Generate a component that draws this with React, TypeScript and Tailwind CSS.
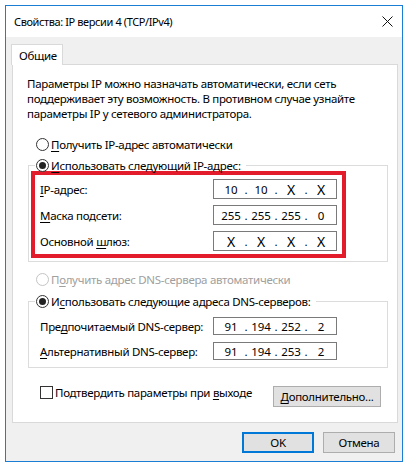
import React from 'react';

const font = { fontFamily: '"Noto Sans", "Liberation Sans", sans-serif' };

// access key: first part, underlined letter, rest
const Key = ({ pre = '', u, post }: { pre?: string; u: string; post: string }) => (
  <span className="whitespace-nowrap">
    {pre}
    <span className="underline underline-offset-2">{u}</span>
    {post}
  </span>
);

const Radio = ({ checked = false, disabled = false, children }: { checked?: boolean; disabled?: boolean; children: React.ReactNode }) => (
  <div className={`flex items-center h-[15px] ${disabled ? 'text-[#a0a0a0]' : 'text-black'}`}>
    <div
      className={`w-[13px] h-[13px] rounded-full border bg-white flex items-center justify-center shrink-0 ${
        disabled ? 'border-[#c4c4c4]' : 'border-[#333333]'
      }`}
    >
      {checked && <div className="w-[7px] h-[7px] rounded-full bg-[#222222]" />}
    </div>
    <span className="ml-[2px]">{children}</span>
  </div>
);

const IpField = ({ parts, h }: { parts: string[]; h: string }) => (
  <div className={`w-[124px] ${h} border border-[#7a7a7a] bg-white flex items-center pl-[6px] tracking-normal shrink-0`}>
    {parts.map((p, i) => (
      <React.Fragment key={i}>
        {i > 0 && <span className="w-[8px] text-center">.</span>}
        <span className={`w-[22px] text-center ${p === 'X' ? 'text-[14px]' : ''}`}>{p}</span>
      </React.Fragment>
    ))}
  </div>
);

export default function App() {
  return (
    <div
      className="w-[410px] h-[467px] bg-white pt-[5px] pl-[5px] text-[11.5px] leading-[15px] tracking-[-0.3px] text-black"
      style={font}
    >
      <div className="w-[398px] h-[457px] border border-[#1a7fd4] flex flex-col">
        {/* title bar */}
        <div className="h-[31px] bg-white flex items-center justify-between pl-[8px] pr-[9px]">
          <span className="text-[11px] tracking-[-0.4px]">Свойства: IP версии 4 (TCP/IPv4)</span>
          <svg width="11" height="11" viewBox="0 0 11 11">
            <path d="M0.5 0.5 L10.5 10.5 M10.5 0.5 L0.5 10.5" stroke="#111" strokeWidth="1" />
          </svg>
        </div>

        <div className="flex-1 bg-[#f0f0f0] flex flex-col">
          {/* tab */}
          <div className="pt-[7px] pl-[5px] flex">
            <div className="relative z-10 -mb-px h-[21px] w-[52px] bg-white border border-b-0 border-[#d9d9d9] pl-[7px] flex items-center">
              Общие
            </div>
          </div>

          {/* panel */}
          <div className="ml-[6px] w-[386px] h-[359px] bg-white border border-[#d9d9d9] flex flex-col">
            <p className="pl-[14px] pt-[11px]">
              Параметры IP можно назначать автоматически, если сеть
              <br />
              поддерживает эту возможность. В противном случае узнайте
              <br />
              параметры IP у сетевого администратора.
            </p>

            <div className="pl-[23px] mt-[16px]">
              <Radio>
                <Key u="П" post="олучить IP-адрес автоматически" />
              </Radio>
            </div>

            <fieldset className="ml-[15px] w-[360px] mt-[6px] border border-[#dcdcdc] pb-[3px]">
              <legend className="ml-[6px] px-[1px] pr-[5px]">
                <Radio checked>
                  <Key u="И" post="спользовать следующий IP-адрес:" />
                </Radio>
              </legend>
              <div className="ml-[2px] -mt-[2px] w-[315px] h-[87px] border-4 border-[#e31c2b] pl-[5px] pr-[5px] pt-[4px] flex flex-col gap-[6px]">
                <div className="flex items-center justify-between h-[20px]">
                  <Key u="I" post="P-адрес:" />
                  <IpField parts={['10', '10', 'X', 'X']} h="h-[20px]" />
                </div>
                <div className="flex items-center justify-between h-[20px]">
                  <Key u="М" post="аска подсети:" />
                  <IpField parts={['255', '255', '255', '0']} h="h-[20px]" />
                </div>
                <div className="flex items-center justify-between h-[20px]">
                  <Key pre="Основной " u="ш" post="люз:" />
                  <IpField parts={['X', 'X', 'X', 'X']} h="h-[20px]" />
                </div>
              </div>
            </fieldset>

            <div className="pl-[23px] mt-[10px]">
              <Radio disabled>
                <Key pre="П" u="о" post="лучить адрес DNS-сервера автоматически" />
              </Radio>
            </div>

            <fieldset className="ml-[15px] w-[360px] mt-[7px] border border-[#dcdcdc] pl-[11px] pb-[7px]">
              <legend className="ml-[-5px] px-[1px] pr-[5px]">
                <Radio checked>
                  <Key pre="И" u="с" post="пользовать следующие адреса DNS-серверов:" />
                </Radio>
              </legend>
              <div className="flex flex-col gap-[7px] mt-[8px]">
                <div className="flex items-center h-[18px]">
                  <span className="w-[173px]">
                    <Key pre="Пре" u="д" post="почитаемый DNS-сервер:" />
                  </span>
                  <IpField parts={['91', '194', '252', '2']} h="h-[18px]" />
                </div>
                <div className="flex items-center h-[18px]">
                  <span className="w-[173px]">
                    <Key u="А" post="льтернативный DNS-сервер:" />
                  </span>
                  <IpField parts={['91', '194', '253', '2']} h="h-[18px]" />
                </div>
              </div>
            </fieldset>

            <div className="flex items-start mt-[18px] pl-[27px] pr-[16px]">
              <div className="flex items-center h-[13px]">
                <div className="w-[13px] h-[13px] border border-[#333333] bg-white shrink-0" />
                <span className="ml-[2px]">
                  <Key pre="Подтвердить параметры при " u="в" post="ыходе" />
                </span>
              </div>
              <button className="ml-auto w-[108px] h-[21px] bg-[#e1e1e1] border border-[#adadad] flex items-center justify-center">
                <Key u="Д" post="ополнительно..." />
              </button>
            </div>
          </div>

          {/* dialog buttons */}
          <div className="flex justify-end gap-[9px] mt-[9px] pr-[7px]">
            <button className="w-[72px] h-[21px] bg-[#e1e1e1] border-2 border-[#0078d7] flex items-center justify-center">
              OK
            </button>
            <button className="w-[72px] h-[21px] bg-[#e1e1e1] border border-[#adadad] flex items-center justify-center">
              Отмена
            </button>
          </div>
        </div>
      </div>
    </div>
  );
}
